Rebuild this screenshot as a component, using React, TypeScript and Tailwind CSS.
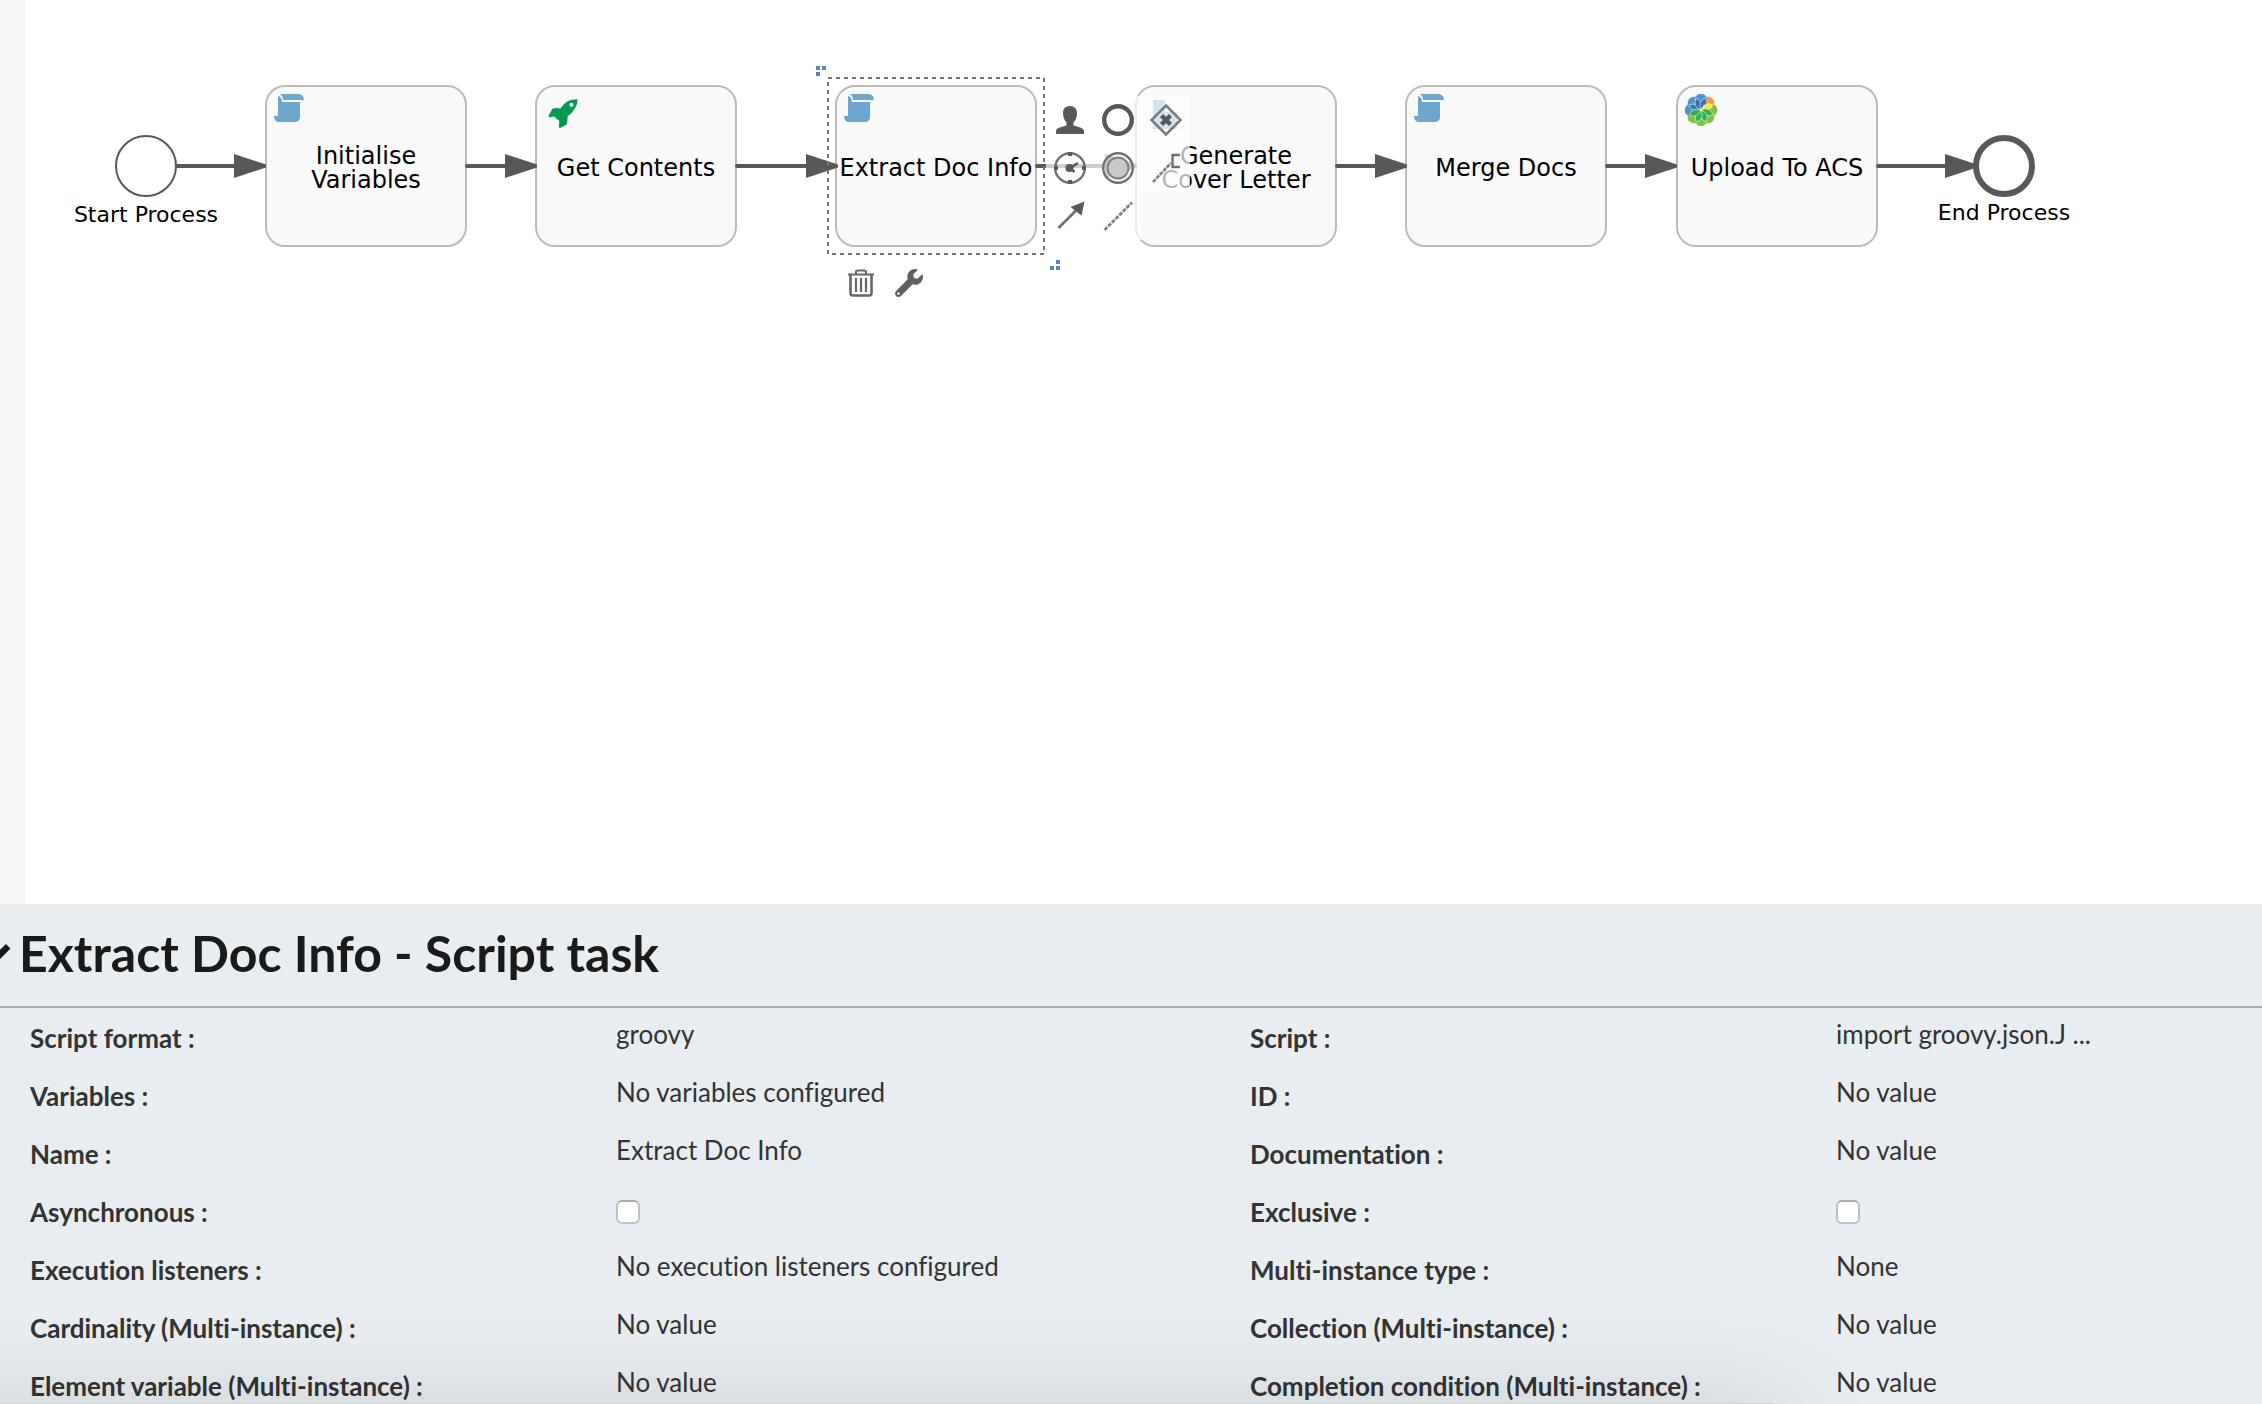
import type { ReactNode } from "react";
import { FaWrench } from "react-icons/fa";

/* ---------- Icons ---------- */

function ScriptIcon() {
  return (
    <svg width="30" height="28" viewBox="0 0 30 28" fill="#6ea6ce" aria-hidden="true">
      <path d="M6 0H25Q30 1 30 6H9Q9 2 6 0Z" />
      <path d="M4 2Q8 3 8 8H26V23Q26 27 22 28H4Q0 27 0 22H4Z" />
    </svg>
  );
}

function RocketIcon() {
  return (
    <svg width="30" height="30" viewBox="0 0 30 30" aria-hidden="true">
      <path
        d="M29.6 .3Q18 0 12.5 9.5Q7 8.500 4.200 10L.4 17Q.2 18.600 1.800 18.300L6 17.500Q8 18 8.500 20Q11 20.500 11.300 22.500L10.800 27.500Q11 29.300 12.500 28.800L18.500 25.500Q19.500 24 19.500 17.500Q29.500 10 29.600 .3Z"
        fill="#00994d"
      />
      <circle cx="23.500" cy="5.800" r="2.100" fill="#f9f9f9" />
    </svg>
  );
}

function DocumentIcon() {
  return (
    <svg width="24" height="29" viewBox="0 0 24 29" aria-hidden="true">
      <path d="M0 0H12V12H24V29H0Z" fill="#6ea6ce" />
    </svg>
  );
}

const PETALS = [
  { angle: 90, color: "#82c341" },
  { angle: 135, color: "#82c341" },
  { angle: 180, color: "#82c341" },
  { angle: 225, color: "#82c341" },
  { angle: 45, color: "#f89a3a" },
  { angle: 270, color: "#4a96c8" },
  { angle: 315, color: "#4a96c8" },
  { angle: 0, color: "#4a96c8" },
];

const LEAVES = [
  { angle: -67, color: "#3d6db0" },
  { angle: -22, color: "#3d6db0" },
  { angle: 22, color: "#3d6db0" },
  { angle: 67, color: "#fdec2f" },
  { angle: 112, color: "#2fb04a" },
  { angle: 157, color: "#2fb04a" },
  { angle: 202, color: "#2fb04a" },
  { angle: 247, color: "#2fb04a" },
];

function FlowerIcon() {
  return (
    <svg width="32" height="32" viewBox="-16 -16 32 32" aria-hidden="true">
      {PETALS.map((p) => (
        <path
          key={p.angle}
          d="M0 0L-6 -8.500A6.200 6.200 0 1 1 6 -8.500Z"
          fill={p.color}
          transform={`rotate(${p.angle})`}
        />
      ))}
      {LEAVES.map((l) => (
        <path
          key={l.angle}
          d="M0 0Q-6.500 -6 -.5 -13Q6.500 -7 0 0Z"
          fill={l.color}
          stroke="#e6f2f2"
          strokeWidth=".6"
          transform={`rotate(${l.angle})`}
        />
      ))}
      <circle r="1.300" fill="#fff" />
    </svg>
  );
}

function PadIcon({ children }: { children: ReactNode }) {
  return (
    <svg
      width="32"
      height="32"
      viewBox="0 0 32 32"
      fill="none"
      stroke="#585858"
      strokeWidth="2"
      aria-hidden="true"
    >
      {children}
    </svg>
  );
}

const UserIcon = () => (
  <PadIcon>
    <path
      d="M16 2C20.500 2 23 5 23 9C23 13 21.500 16.500 19.500 18.500V21.500C24 23 30 23.500 30 27.500V30H2V27.500C2 23.500 8 23 12.500 21.500V18.500C10.500 16.500 9 13 9 9C9 5 11.500 2 16 2Z"
      fill="#585858"
      stroke="none"
    />
  </PadIcon>
);

const EndEventIcon = () => (
  <PadIcon>
    <circle cx="16" cy="16" r="13.800" strokeWidth="4.400" />
  </PadIcon>
);

const GatewayIcon = () => (
  <PadIcon>
    <path d="M16 1.500L30.500 16L16 30.500L1.500 16Z" stroke="#7a7a7a" strokeWidth="2.500" />
    <path d="M11.500 11.500L20.500 20.500M20.500 11.500L11.500 20.500" strokeWidth="4.500" />
  </PadIcon>
);

const TimerIcon = () => (
  <PadIcon>
    <circle cx="16" cy="16" r="14.800" stroke="#707070" strokeWidth="2.400" />
    <path d="M16 0V4M16 28V32M0 16H4M28 16H32" strokeWidth="4" />
    <circle cx="15.500" cy="16" r="4" fill="#585858" stroke="none" />
    <path d="M16 16L24 11M16 16L20.500 20" strokeWidth="2.500" />
  </PadIcon>
);

const IntermediateIcon = () => (
  <PadIcon>
    <circle cx="16" cy="16" r="14.800" stroke="#707070" strokeWidth="2.400" />
    <circle cx="16" cy="16" r="10.500" stroke="#808080" fill="#c9c9c9" strokeWidth="2" />
  </PadIcon>
);

const AnnotationIcon = () => (
  <PadIcon>
    <path d="M3 30L21 11" stroke="#808080" strokeWidth="2.600" strokeDasharray="4 1" />
    <path d="M30 3H22.500V15H30" stroke="#707070" strokeWidth="2.400" />
  </PadIcon>
);

const FlowIcon = () => (
  <PadIcon>
    <path d="M4.500 28L23 9.500" stroke="#707070" strokeWidth="2.600" />
    <path d="M30.500 1.500L16.500 7L27.500 15.500Z" fill="#585858" stroke="none" />
  </PadIcon>
);

const AssociationIcon = () => (
  <PadIcon>
    <path d="M2.500 30L30 2.500" stroke="#808080" strokeWidth="2.800" strokeDasharray="4 1.200" />
  </PadIcon>
);

function TrashIcon() {
  return (
    <svg
      width="28"
      height="28"
      viewBox="0 0 28 28"
      fill="none"
      stroke="#666"
      strokeWidth="2.200"
      aria-hidden="true"
    >
      <path d="M1 5.500H27M9 5V3.500Q9 1.500 11 1.500H17Q19 1.500 19 3.500V5" />
      <path d="M3.500 6V24Q3.500 26.500 6 26.500H22Q24.500 26.500 24.500 24V6" strokeWidth="2.600" />
      <path d="M9 9V23M14 9V23M19 9V23" />
    </svg>
  );
}

/* ---------- Diagram ---------- */

type Task = { x: number; lines: string[]; icon: ReactNode; iconClass: string };

const TASKS: Task[] = [
  { x: 239, lines: ["Initialise", "Variables"], icon: <ScriptIcon />, iconClass: "left-[7px] top-[7px]" },
  { x: 509, lines: ["Get Contents"], icon: <RocketIcon />, iconClass: "left-[11px] top-[12px]" },
  { x: 809, lines: ["Extract Doc Info"], icon: <ScriptIcon />, iconClass: "left-[7px] top-[7px]" },
  { x: 1109, lines: ["Generate", "Cover Letter"], icon: <DocumentIcon />, iconClass: "left-[16px] top-[13px]" },
  { x: 1379, lines: ["Merge Docs"], icon: <ScriptIcon />, iconClass: "left-[7px] top-[7px]" },
  { x: 1650, lines: ["Upload To ACS"], icon: <FlowerIcon />, iconClass: "left-[7px] top-[7px]" },
];

const FLOWS = [
  { from: 151, to: 241 },
  { from: 441, to: 512 },
  { from: 711, to: 813 },
  { from: 1011, to: 1112 },
  { from: 1311, to: 1382 },
  { from: 1581, to: 1652 },
  { from: 1852, to: 1952 },
];

const PAD = [
  { label: "Create user task", icon: <UserIcon /> },
  { label: "Create end event", icon: <EndEventIcon /> },
  { label: "Create gateway", icon: <GatewayIcon /> },
  { label: "Create timer event", icon: <TimerIcon /> },
  { label: "Create intermediate event", icon: <IntermediateIcon /> },
  { label: "Create annotation", icon: <AnnotationIcon /> },
  { label: "Create sequence flow", icon: <FlowIcon /> },
  { label: "Create association", icon: <AssociationIcon /> },
];

function TaskNode({ task }: { task: Task }) {
  return (
    <div
      className="absolute top-[85px] flex h-[162px] w-[202px] items-center justify-center rounded-[20px] border-2 border-[#bbbbbb] bg-[#f9f9f9] pt-[3px]"
      style={{ left: task.x }}
    >
      <span className={`absolute ${task.iconClass}`}>{task.icon}</span>
      <p className="relative text-center text-[24px] leading-6 whitespace-nowrap">
        {task.lines.map((line) => (
          <span key={line} className="block">
            {line}
          </span>
        ))}
      </p>
    </div>
  );
}

function Canvas() {
  return (
    <main className="relative flex-1 overflow-hidden bg-white font-['DejaVu_Sans',Verdana,sans-serif] text-black">
      {TASKS.map((task) => (
        <TaskNode key={task.x} task={task} />
      ))}

      <svg className="pointer-events-none absolute inset-0 h-full w-full" aria-hidden="true">
        <circle cx="120" cy="166" r="30" fill="#fff" stroke="#585858" strokeWidth="2" />
        {FLOWS.map((f) => (
          <g key={f.from} fill="#585858">
            <path d={`M${f.from} 166H${f.to - 4}`} stroke="#585858" strokeWidth="4" strokeLinecap="round" />
            <path d={`M${f.to - 33} 154L${f.to - 1} 164.500V167.500L${f.to - 33} 178Z`} />
          </g>
        ))}
        <circle cx="1978" cy="166" r="28" fill="#fff" stroke="#585858" strokeWidth="6" />
        <rect
          x="802"
          y="78"
          width="216"
          height="176"
          fill="none"
          stroke="#767676"
          strokeWidth="2"
          strokeDasharray="4 4"
        />
        <path d="M790 66h4v4h-4zM796 66h4v4h-4zM790 72h4v4h-4z" fill="#5585bd" />
        <path d="M1030 260h4v4h-4zM1024 266h4v4h-4zM1030 266h4v4h-4z" fill="#5585bd" />
      </svg>

      <p className="absolute top-[203px] left-[20px] w-[200px] text-center text-[22px] leading-6">
        Start Process
      </p>
      <p className="absolute top-[201px] left-[1878px] w-[200px] text-center text-[22px] leading-6">
        End Process
      </p>

      <div className="absolute top-[96px] left-[1020px] grid w-[144px] grid-cols-3">
        {PAD.map((item) => (
          <button
            key={item.label}
            type="button"
            aria-label={item.label}
            className="flex h-12 w-12 items-center justify-center bg-white/70"
          >
            {item.icon}
          </button>
        ))}
      </div>

      <div className="absolute top-[259px] left-[811px] flex">
        <button type="button" aria-label="Delete" className="flex h-12 w-12 items-center justify-center">
          <TrashIcon />
        </button>
        <button type="button" aria-label="Change type" className="flex h-12 w-12 items-center justify-center">
          <FaWrench size={28} color="#606060" />
        </button>
      </div>
    </main>
  );
}

/* ---------- Properties ---------- */

type Property = { label: string; value?: string; checkboxId?: string };

const PROPERTIES: Property[] = [
  { label: "Script format", value: "groovy" },
  { label: "Script", value: "import groovy.json.J ..." },
  { label: "Variables", value: "No variables configured" },
  { label: "ID", value: "No value" },
  { label: "Name", value: "Extract Doc Info" },
  { label: "Documentation", value: "No value" },
  { label: "Asynchronous", checkboxId: "asynchronous" },
  { label: "Exclusive", checkboxId: "exclusive" },
  { label: "Execution listeners", value: "No execution listeners configured" },
  { label: "Multi-instance type", value: "None" },
  { label: "Cardinality (Multi-instance)", value: "No value" },
  { label: "Collection (Multi-instance)", value: "No value" },
  { label: "Element variable (Multi-instance)", value: "No value" },
  { label: "Completion condition (Multi-instance)", value: "No value" },
];

function PropertyPair({ property }: { property: Property }) {
  const { label, value, checkboxId } = property;
  return (
    <>
      <dt className="h-[58px] pt-3 font-bold">
        {checkboxId ? <label htmlFor={checkboxId}>{label} :</label> : `${label} :`}
      </dt>
      <dd className="h-[58px] pt-2">
        {checkboxId ? (
          <input
            id={checkboxId}
            type="checkbox"
            className="mt-2.5 block h-6 w-6 appearance-none rounded-[6px] border-2 border-[#bfc2c4] border-t-[#a9abad] bg-white checked:bg-blue-500"
          />
        ) : (
          value
        )}
      </dd>
    </>
  );
}

function PropertiesPanel() {
  return (
    <section className="relative h-[500px] shrink-0 overflow-hidden bg-[#e8edf1] font-['Lato',sans-serif] text-[#333333] [font-variant-ligatures:none]">
      <header className="flex border-b-2 border-[#a2adb9] pt-[19px] pb-[23px] text-[#1a1a1a]">
        <button type="button" aria-label="Collapse properties" className="w-[19px]">
          <svg width="18" height="20" viewBox="0 0 18 20" aria-hidden="true">
            <path d="M-18 5L-14 1L-4 10.500L6 1L10.500 5.500L-4 20Z" fill="#1a1a1a" />
          </svg>
        </button>
        <h1 className="text-[50px] leading-[60px] font-bold">Extract Doc Info - Script task</h1>
      </header>

      <dl className="grid grid-cols-[586fr_634fr_586fr_426fr] pl-[30px] text-[26px] leading-9">
        {PROPERTIES.map((property) => (
          <PropertyPair key={property.label} property={property} />
        ))}
      </dl>

      <div className="pointer-events-none absolute -bottom-[39px] -left-[100px] h-10 w-[1880px] rounded-[8px] bg-[#cfd3d6] shadow-[0_24px_100px_rgba(0,0,0,0.28)]" />
    </section>
  );
}

export default function App() {
  return (
    <div className="flex h-screen flex-col overflow-hidden">
      <div className="flex flex-1">
        <aside className="w-[26px] shrink-0 bg-[#f7f7f7]" />
        <Canvas />
      </div>
      <PropertiesPanel />
    </div>
  );
}
